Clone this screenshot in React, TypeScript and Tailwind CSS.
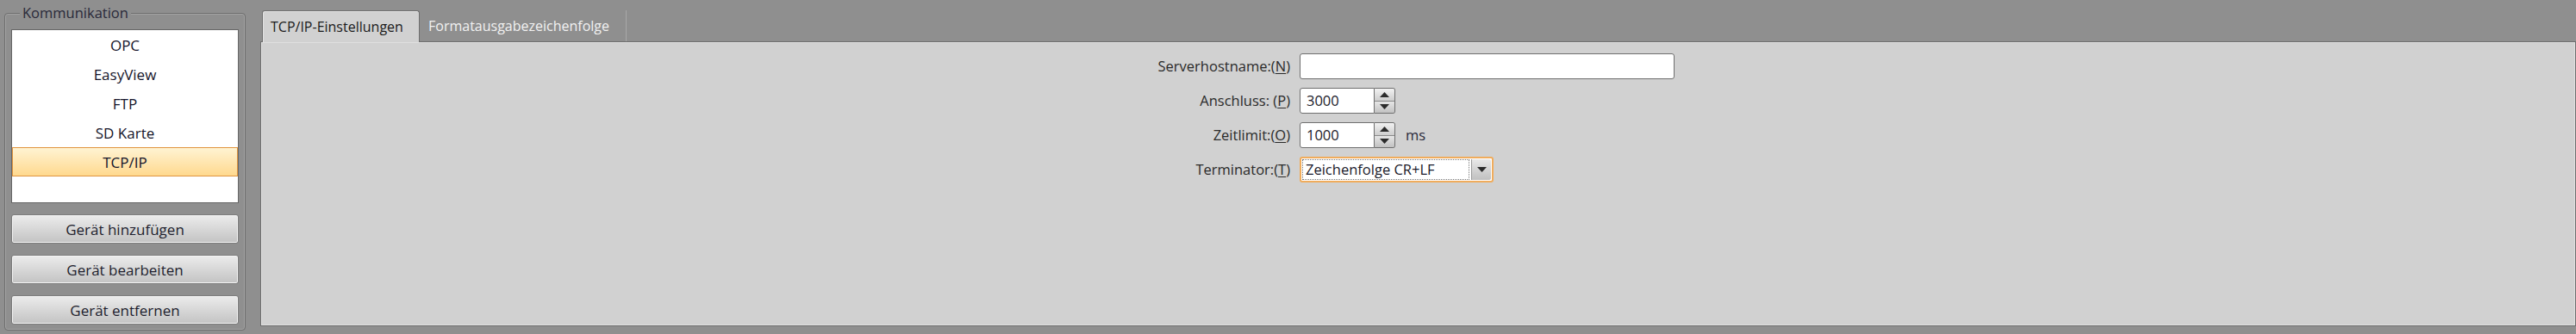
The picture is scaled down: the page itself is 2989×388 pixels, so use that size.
import React from "react";

const items = ["OPC", "EasyView", "FTP", "SD Karte", "TCP/IP"];
const actions = ["Gerät hinzufügen", "Gerät bearbeiten", "Gerät entfernen"];

function Tri({ up }: { up?: boolean }) {
  return (
    <svg width="11" height="6" viewBox="0 0 11 6">
      <polygon points={up ? "0,6 11,6 5.5,0" : "0,0 11,0 5.5,6"} fill="#2b2b2b" />
    </svg>
  );
}

function Spin({ value }: { value: string }) {
  return (
    <div className="flex h-[30px]">
      <div className="flex w-[87px] items-center rounded-l-[3px] border border-[#6f6f6f] bg-white pl-[7px] text-[#1a1a2a]">
        {value}
      </div>
      <div className="flex w-[24px] flex-col overflow-hidden rounded-r-[3px] border border-l-0 border-[#6f6f6f]">
        <div className="flex flex-1 items-center justify-center border-b border-[#8a8a8a] bg-gradient-to-b from-[#f2f2f2] to-[#cdcdcd]">
          <Tri up />
        </div>
        <div className="flex flex-1 items-center justify-center bg-gradient-to-b from-[#e6e6e6] to-[#c2c2c2]">
          <Tri />
        </div>
      </div>
    </div>
  );
}

function Label({ text, mn, sp }: { text: string; mn: string; sp?: boolean }) {
  return (
    <div className="flex h-[30px] items-center justify-end text-[#2a2a2a]">
      {text}
      {sp ? "\u00a0" : ""}(<span className="underline underline-offset-2">{mn}</span>)
    </div>
  );
}

export default function App() {
  return (
    <div className="flex h-[388px] w-[2989px] bg-[#8f8f8f] pl-[5px] font-['Open_Sans',sans-serif] text-[16.5px] leading-none">
      {/* Kommunikation group */}
      <div className="relative mt-[15px] h-[369px] w-[280px] rounded-[4px] border border-[#6e6e6e] px-[7px] pt-[18px] shadow-[inset_0_0_0_1px_#a3a3a3]">
        <div className="absolute -top-[9px] left-[17px] bg-[#8f8f8f] px-[3px] text-[#2a2a3a]">Kommunikation</div>
        <div className="h-[202px] w-[264px] border border-[#666] bg-white text-[17px]">
          {items.map((it) =>
            it === "TCP/IP" ? (
              <div
                key={it}
                className="flex h-[34px] items-center justify-center border border-[#e0953f] bg-gradient-to-b from-[#fff3d2] to-[#ffd98e] font-medium text-[#14142a]"
              >
                {it}
              </div>
            ) : (
              <div key={it} className="flex h-[34px] items-center justify-center font-medium text-[#14142a]">
                {it}
              </div>
            )
          )}
        </div>
        <div className="mt-[13px] flex flex-col gap-[13px] text-[17px]">
          {actions.map((a) => (
            <div
              key={a}
              className="flex h-[34px] w-[264px] items-center justify-center rounded-[3px] border border-[#7c7c7c] bg-gradient-to-b from-[#ececec] to-[#c3c3c3] text-[#1e1e2e] shadow-[inset_0_0_0_1px_#f4f4f4]"
            >
              {a}
            </div>
          ))}
        </div>
      </div>

      {/* Tab control */}
      <div className="ml-[17px] flex w-[2687px] flex-col pt-[12px]">
        <div className="relative z-10 flex h-[37px] pl-[2px] text-[16px]">
          <div className="flex w-[183px] items-center rounded-t-[3px] border border-b-0 border-[#6e6e6e] bg-[#d1d1d1] pl-[9px] text-[#1a1a1a] shadow-[inset_1px_1px_0_#e2e2e2]">
            TCP/IP-Einstellungen
          </div>
          <div className="mb-[1px] flex w-[240px] items-center border-r border-[#a8a8a8] pl-[10px] text-[#f2f2f2]">
            Formatausgabezeichenfolge
          </div>
        </div>
        <div className="-mt-[1px] h-[331px] border border-[#6e6e6e] bg-[#d1d1d1] shadow-[inset_1px_1px_0_#e0e0e0,inset_-1px_-1px_0_#e0e0e0]">
          <div className="grid grid-cols-[194px_auto] gap-x-[11px] gap-y-[10px] pl-[1000px] pt-[13px]">
            <Label text="Serverhostname:" mn="N" />
            <div className="h-[30px] w-[435px] rounded-[3px] border border-[#6f6f6f] bg-white" />

            <Label text="Anschluss:" mn="P" sp />
            <Spin value="3000" />

            <Label text="Zeitlimit:" mn="O" />
            <div className="flex items-center">
              <Spin value="1000" />
              <span className="ml-[12px] text-[#2a2a3a]">ms</span>
            </div>

            <Label text="Terminator:" mn="T" />
            <div className="flex h-[30px] w-[225px] rounded-[3px] border-2 border-[#f0ac5c] bg-white p-[1px]">
              <div className="flex flex-1 items-center border border-dotted border-[#777] pl-[3px] text-[#1a1a2a]">
                Zeichenfolge CR+LF
              </div>
              <div className="ml-[2px] flex w-[23px] items-center justify-center rounded-r-[2px] border-l border-[#9a9a9a] bg-gradient-to-b from-[#e8e8e8] to-[#c0c0c0]">
                <Tri />
              </div>
            </div>
          </div>
        </div>
      </div>
    </div>
  );
}
